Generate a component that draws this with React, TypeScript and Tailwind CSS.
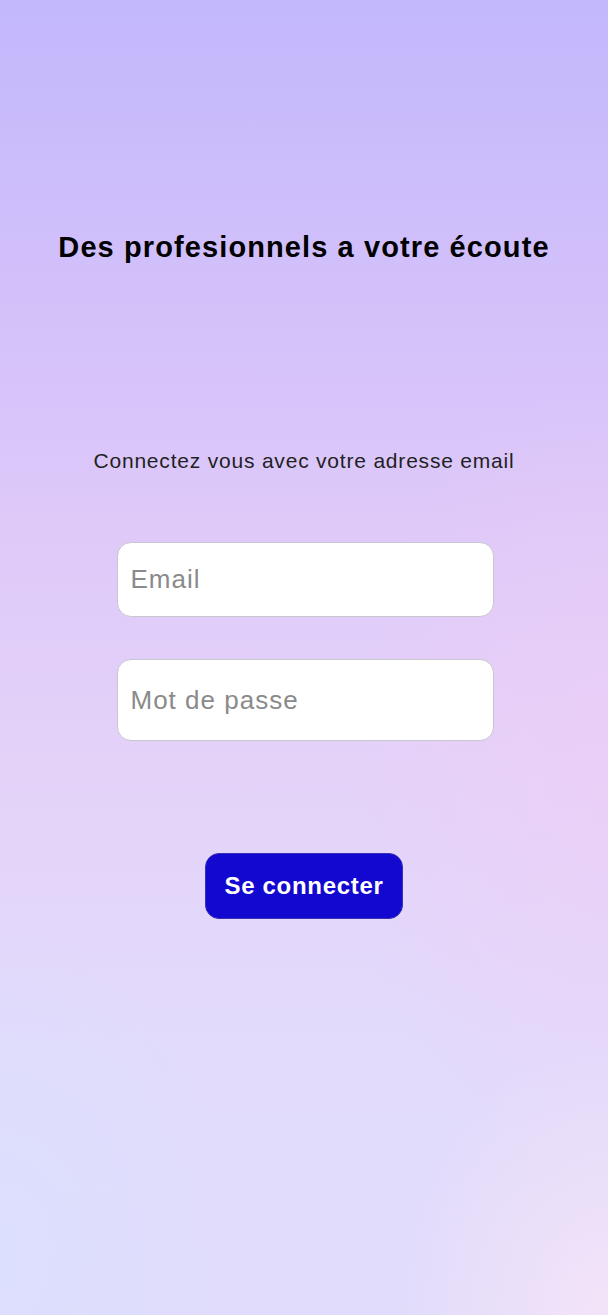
import { useState } from "react";

const LoginScreen = () => {
  const [email, setEmail] = useState("");
  const [password, setPassword] = useState("");

  return (
    <div className="relative min-h-[1315px] w-full overflow-hidden bg-[linear-gradient(180deg,#c3b8fc_0%,#d2c0fa_22%,#dec9f9_40%,#e4d2f9_58%,#e2dbfb_80%,#e1dcfb_100%)] font-['Liberation_Sans',Arial,sans-serif]">
      {/* soft colour washes */}
      <div className="pointer-events-none absolute inset-0 bg-[radial-gradient(ellipse_60%_45%_at_100%_60%,rgba(240,205,246,0.55),transparent_70%)]" />
      <div className="pointer-events-none absolute inset-0 bg-[radial-gradient(ellipse_55%_35%_at_0%_95%,rgba(218,224,254,0.8),transparent_70%)]" />
      <div className="pointer-events-none absolute inset-0 bg-[radial-gradient(ellipse_50%_30%_at_100%_100%,rgba(245,228,248,0.9),transparent_70%)]" />

      <div className="relative flex flex-col items-center pt-[231px]">
        <h1 className="text-[29px] font-bold leading-8 tracking-[1.1px] text-black">
          Des profesionnels a votre écoute
        </h1>

        <p className="mt-[186px] text-[21px] leading-6 tracking-[0.8px] text-[#1f1f24]">
          Connectez vous avec votre adresse email
        </p>

        <form
          className="mt-[69px] flex flex-col items-center"
          onSubmit={(e) => e.preventDefault()}
        >
          <input
            type="email"
            value={email}
            onChange={(e) => setEmail(e.target.value)}
            placeholder="Email"
            className="ml-[2px] h-[75px] w-[377px] rounded-[14px] border border-[#c9c6cf] bg-white px-[13px] text-[26px] tracking-[1px] text-[#222] outline-none placeholder:text-[#8a8a8a]"
          />
          <input
            type="password"
            value={password}
            onChange={(e) => setPassword(e.target.value)}
            placeholder="Mot de passe"
            className="ml-[2px] mt-[42px] h-[82px] w-[377px] rounded-[14px] border border-[#c9c6cf] bg-white px-[13px] text-[26px] tracking-[1px] text-[#222] outline-none placeholder:text-[#8a8a8a]"
          />

          <button
            type="submit"
            className="mt-[112px] h-[66px] w-[198px] rounded-[14px] border border-[#3a30b8] bg-[#1208d0] text-[24px] font-bold tracking-[0.7px] text-white"
          >
            Se connecter
          </button>
        </form>
      </div>
    </div>
  );
};

export default function App() {
  return <LoginScreen />;
}
